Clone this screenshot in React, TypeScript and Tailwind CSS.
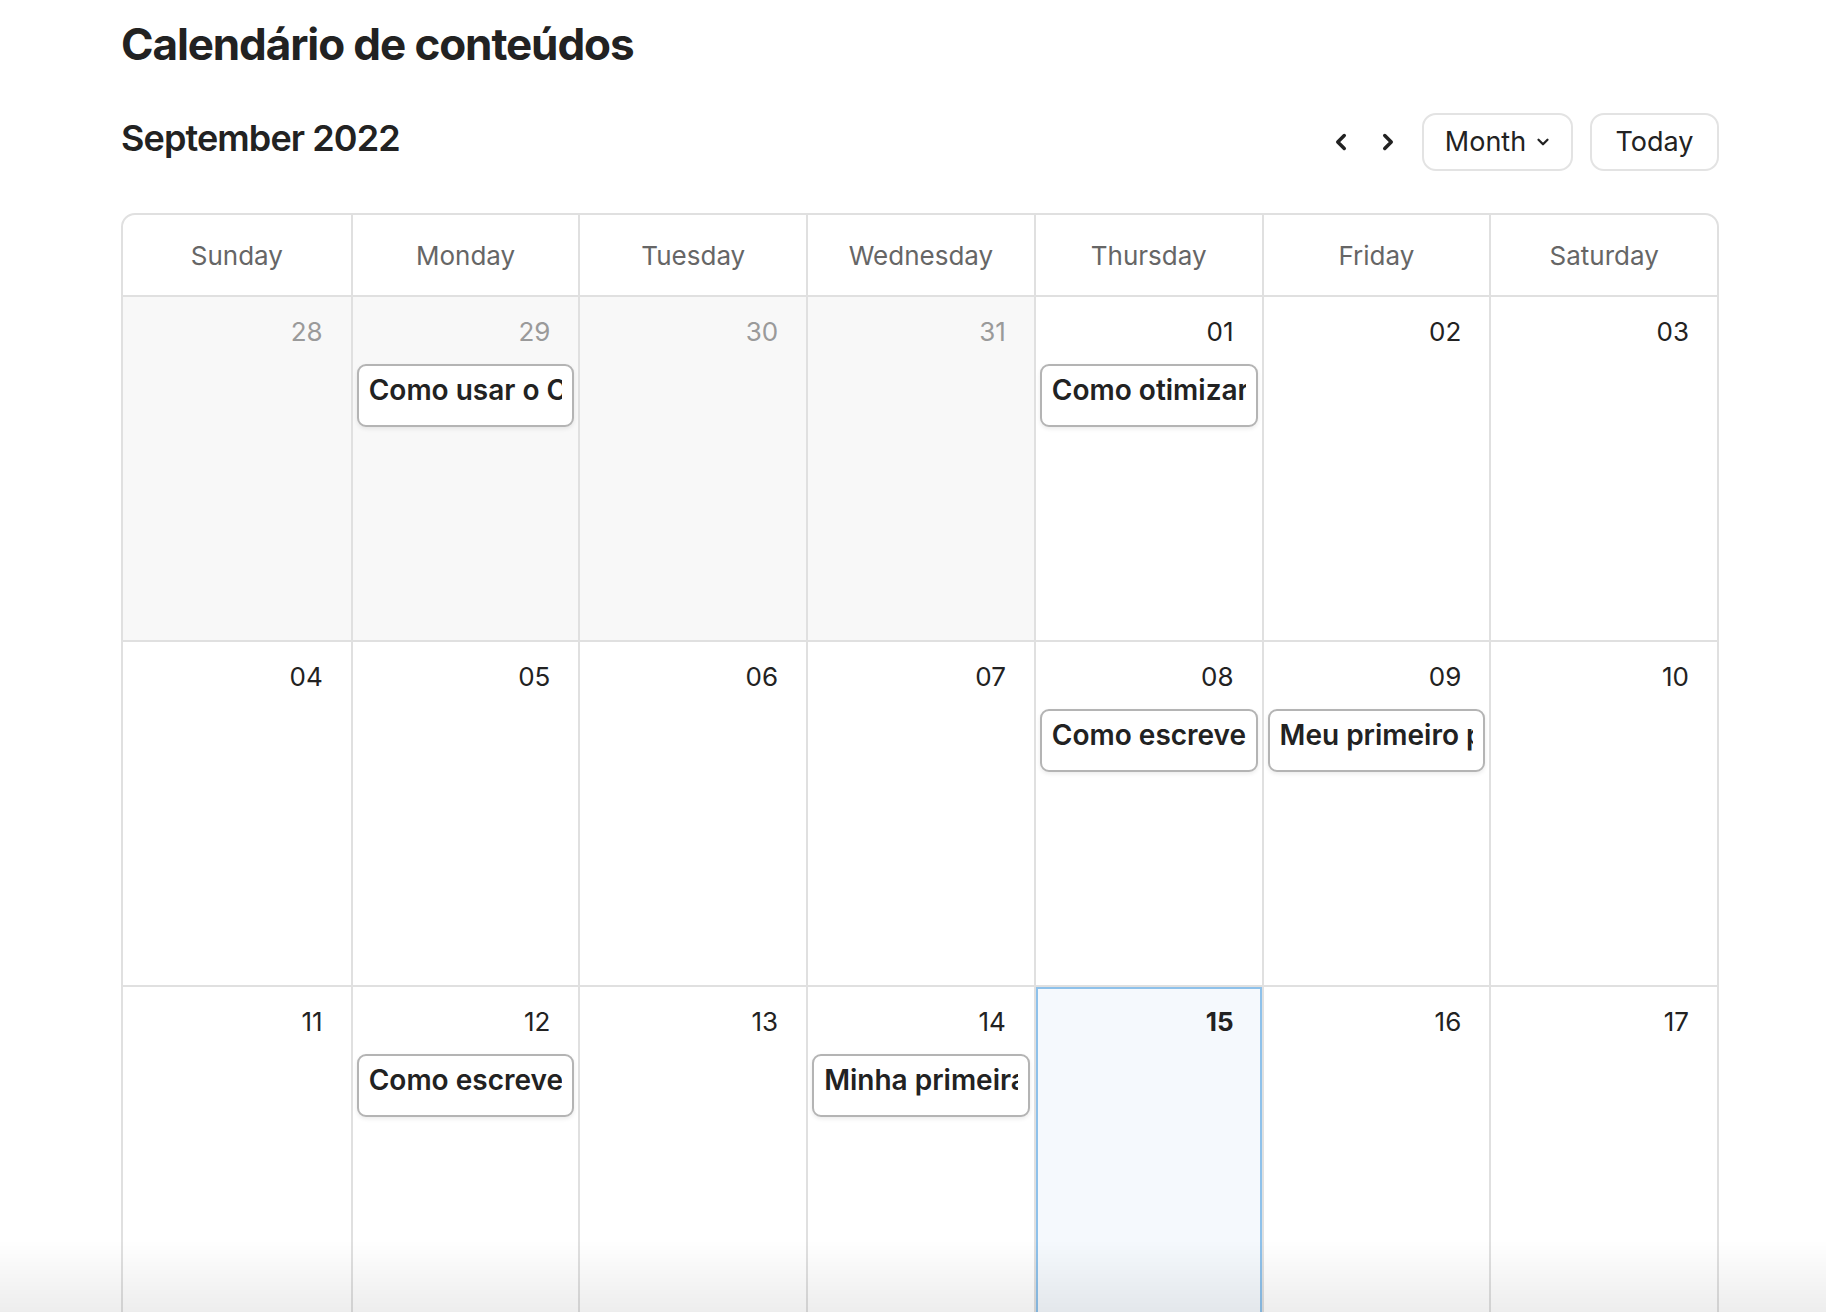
import { ChevronDown, ChevronLeft, ChevronRight } from "lucide-react";

type Day = {
  label: string;
  outside?: boolean;
  today?: boolean;
  events?: string[];
};

const weekdays = [
  "Sunday",
  "Monday",
  "Tuesday",
  "Wednesday",
  "Thursday",
  "Friday",
  "Saturday",
];

const weeks: Day[][] = [
  [
    { label: "28", outside: true },
    { label: "29", outside: true, events: ["Como usar o Contentools"] },
    { label: "30", outside: true },
    { label: "31", outside: true },
    { label: "01", events: ["Como otimizar seu blog"] },
    { label: "02" },
    { label: "03" },
  ],
  [
    { label: "04" },
    { label: "05" },
    { label: "06" },
    { label: "07" },
    { label: "08", events: ["Como escrever um post"] },
    { label: "09", events: ["Meu primeiro post"] },
    { label: "10" },
  ],
  [
    { label: "11" },
    { label: "12", events: ["Como escrever um e-book"] },
    { label: "13" },
    { label: "14", events: ["Minha primeira pauta"] },
    { label: "15", today: true },
    { label: "16" },
    { label: "17" },
  ],
  [
    { label: "18" },
    { label: "19" },
    { label: "20" },
    { label: "21" },
    { label: "22" },
    { label: "23" },
    { label: "24" },
  ],
  [
    { label: "25" },
    { label: "26" },
    { label: "27" },
    { label: "28" },
    { label: "29" },
    { label: "30" },
    { label: "01", outside: true },
  ],
];

function DayCell({ day, first }: { day: Day; first: boolean }) {
  return (
    <div
      className={[
        "flex h-[343px] min-w-0 flex-col px-[4px]",
        first ? "" : "border-l-2 border-[#e0e0e0]",
        day.outside ? "bg-[#f8f8f8]" : "",
        day.today ? "bg-[#f5f9fd] shadow-[inset_0_0_0_2px_#8ec1ea]" : "",
      ].join(" ")}
    >
      <div
        className={[
          "pr-[24px] pt-[19px] text-right text-[26px] leading-[32px]",
          day.outside ? "text-[#9a9a9a]" : "text-[#222]",
          day.today ? "font-bold" : "",
        ].join(" ")}
      >
        {day.label}
      </div>
      {day.events?.map((title) => (
        <div
          key={title}
          className="mt-[16px] h-[63px] rounded-[9px] border-2 border-[#b4b4b4] bg-white px-[10px] pt-[7px] shadow-[0_2px_4px_rgba(0,0,0,0.08)]"
        >
          <div className="overflow-hidden whitespace-nowrap text-[28px] font-semibold leading-[34px] text-[#222]">
            {title}
          </div>
        </div>
      ))}
    </div>
  );
}

export default function App() {
  return (
    <div className="min-h-screen bg-white font-['Inter',sans-serif] text-[#222]">
      <div className="pl-[121px] pt-[16px]">
        <div className="w-[1598px]">
          <h1 className="text-[44px] font-bold leading-[56px] tracking-tight text-[#222]">
            Calendário de conteúdos
          </h1>

          <div className="mt-[34px] flex items-start justify-between">
            <h2 className="pt-[10px] text-[36px] font-semibold leading-[44px] tracking-tight text-[#222]">
              September 2022
            </h2>
            <div className="mt-[7px] flex items-center">
              <button className="flex h-[40px] w-[30px] items-center justify-center text-[#222]">
                <ChevronLeft size={26} strokeWidth={3.25} />
              </button>
              <button className="ml-[17px] flex h-[40px] w-[30px] items-center justify-center text-[#222]">
                <ChevronRight size={26} strokeWidth={3.25} />
              </button>
              <button className="ml-[19px] flex h-[58px] w-[151px] items-center justify-center gap-[8px] rounded-[14px] border-2 border-[#e3e3e3] pl-[2px] text-[27px] text-[#222]">
                Month
                <ChevronDown size={18} strokeWidth={3} />
              </button>
              <button className="ml-[17px] flex h-[58px] w-[129px] items-center justify-center rounded-[14px] border-2 border-[#e3e3e3] text-[27px] text-[#222]">
                Today
              </button>
            </div>
          </div>

          <div className="mt-[42px] overflow-hidden rounded-[14px] border-2 border-[#e0e0e0]">
            <div className="grid grid-cols-7 border-b-2 border-[#e0e0e0]">
              {weekdays.map((name, i) => (
                <div
                  key={name}
                  className={[
                    "flex h-[80px] items-center justify-center text-[26px] text-[#666]",
                    i === 0 ? "" : "border-l-2 border-[#e0e0e0]",
                  ].join(" ")}
                >
                  {name}
                </div>
              ))}
            </div>
            {weeks.map((week, w) => (
              <div
                key={w}
                className="grid grid-cols-7 border-b-2 border-[#e0e0e0]"
              >
                {week.map((day, i) => (
                  <DayCell key={i} day={day} first={i === 0} />
                ))}
              </div>
            ))}
          </div>
        </div>
      </div>

      {/* window shade along the bottom edge */}
      <div className="pointer-events-none fixed inset-x-0 bottom-0 h-[72px] bg-gradient-to-b from-transparent to-black/[0.07]" />
    </div>
  );
}
